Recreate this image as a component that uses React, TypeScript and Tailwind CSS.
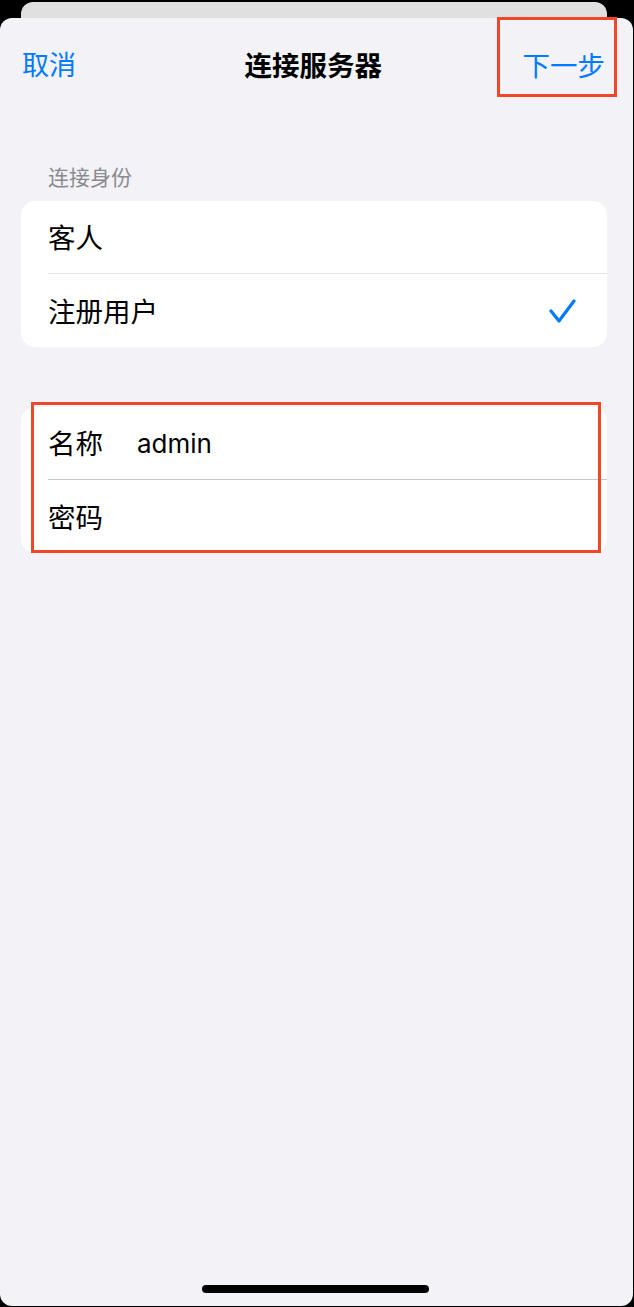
import React from "react";

const cjk = { fontFamily: '"Noto Sans CJK SC", "Noto Sans", sans-serif' };
const latin = { fontFamily: 'Inter, "Noto Sans CJK SC", sans-serif' };

export default function App() {
  return (
    <div className="w-[634px] h-[1307px] bg-black overflow-hidden flex flex-col" style={cjk}>
      <div className="mx-[21px] mt-[2px] h-[30px] shrink-0 rounded-t-[12px] bg-[#e0e0e0] w-[586px]" />
      <div className="relative -mt-[14px] w-[633px] flex-1 mb-[1px] rounded-[12px] bg-[#f2f2f7] flex flex-col">
        {/* nav */}
        <div className="h-[92px] shrink-0 flex items-center justify-between pl-[22px] pr-[28px]">
          <span className="text-[27px] leading-[32px] text-[#007aff]">取消</span>
          <span className="text-[27.5px] leading-[32px] font-semibold text-black ml-[28px]">连接服务器</span>
          <span className="text-[27.5px] leading-[32px] text-[#007aff]">下一步</span>
        </div>
        <div className="absolute left-[497px] top-[-1px] w-[120px] h-[80px] border-[3px] border-[#f0472b]" />

        {/* section header */}
        <div className="mt-[52px] h-[28px] leading-[28px] pl-[48px] text-[21px] text-[#8a8a8e]">连接身份</div>

        {/* card 1 */}
        <div className="mt-[11px] mx-[21px] w-[586px] rounded-[14px] bg-white flex flex-col">
          <div className="h-[72px] flex items-center pl-[27px] text-[27.5px] text-black">客人</div>
          <div className="ml-[27px] h-[1px] bg-[#e3e3e6]" />
          <div className="h-[73px] flex items-center justify-between pl-[27px] pr-[31px] text-[27.5px] text-black">
            <span>注册用户</span>
            <svg width="28" height="28" viewBox="0 0 28 28" fill="none">
              <polyline
                points="3,14 11,24 26,4"
                stroke="#007aff"
                strokeWidth="3.2"
                strokeLinecap="round"
                strokeLinejoin="round"
              />
            </svg>
          </div>
        </div>

        {/* card 2 */}
        <div className="relative mt-[60px] mx-[21px] w-[586px] rounded-[14px] bg-white flex flex-col">
          <div className="h-[72px] flex items-center pl-[27px] text-[27.5px] text-black">
            <span>名称</span>
            <span className="ml-[34px] text-[26px]" style={latin}>admin</span>
          </div>
          <div className="ml-[27px] h-[1px] bg-[#c8c8cc]" />
          <div className="h-[73px] flex items-center pl-[27px] text-[27.5px] text-black">密码</div>
          <div className="absolute left-[10px] top-[-5px] w-[570px] h-[151px] border-[3px] border-[#f0472b]" />
        </div>

        <div className="flex-1" />
        <div className="mb-[13px] self-center ml-[-3px] w-[227px] h-[8px] rounded-full bg-black" />
      </div>
    </div>
  );
}
